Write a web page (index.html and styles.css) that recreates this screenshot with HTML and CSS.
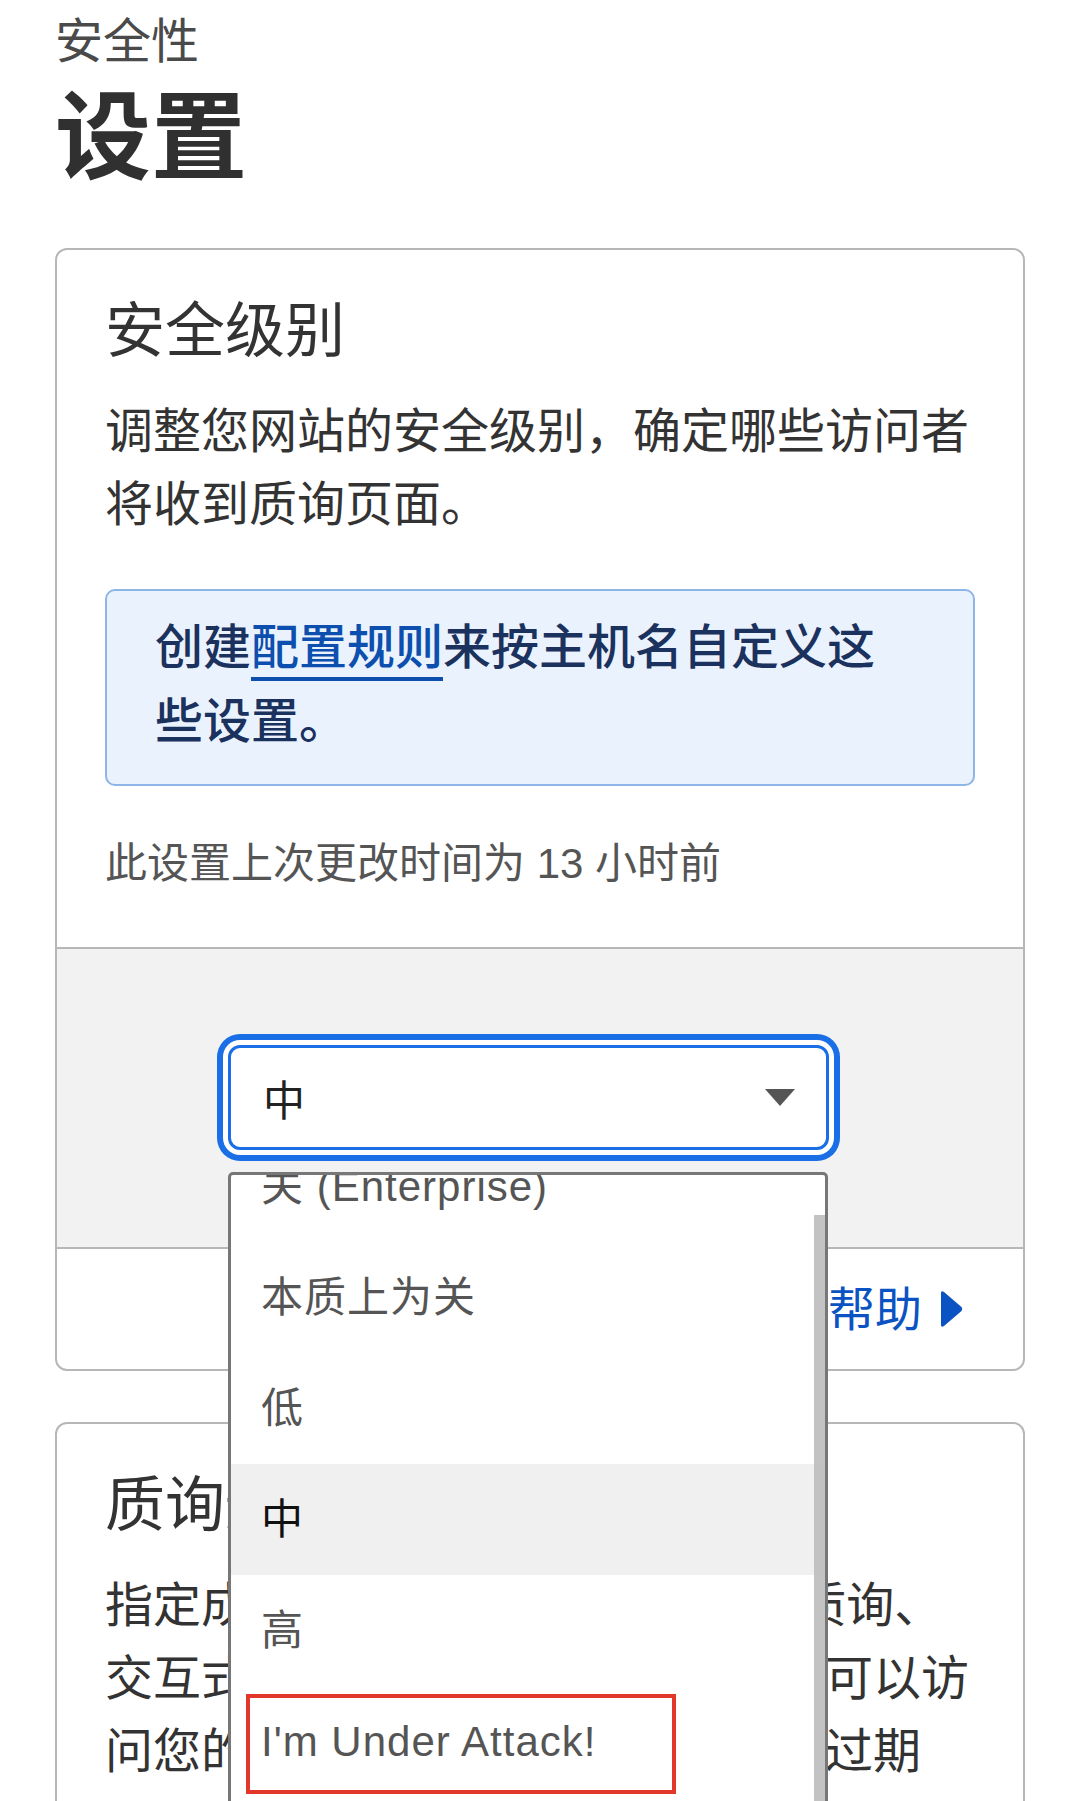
FILE: index.html
```html
<!DOCTYPE html>
<html lang="zh-CN">
<head>
<meta charset="utf-8">
<title>设置 - 安全性</title>
<link rel="stylesheet" href="styles.css">
</head>
<body>
<div class="page">
  <div class="crumb">安全性</div>
  <h1 class="page-title">设置</h1>

  <section class="card">
    <div class="card-body">
      <h2 class="card-title">安全级别</h2>
      <p class="card-desc">调整您网站的安全级别，确定哪些访问者将收到质询页面。</p>
      <div class="callout">创建<a class="callout-link" href="#">配置规则</a>来按主机名自定义这些设置。</div>
      <p class="meta">此设置上次更改时间为 13 小时前</p>
    </div>
    <div class="control">
      <div class="select-wrap">
        <div class="select">
          <span class="select-value">中</span>
          <svg class="select-caret" width="30" height="17" viewBox="0 0 30 17"><polygon points="0,0 30,0 15,17" fill="#555"/></svg>
        </div>
        <div class="listbox">
          <ul class="options">
            <li class="option">关 (Enterprise)</li>
            <li class="option">本质上为关</li>
            <li class="option">低</li>
            <li class="option selected">中</li>
            <li class="option">高</li>
            <li class="option marked">I'm Under Attack!</li>
          </ul>
          <div class="scroll-thumb"></div>
        </div>
      </div>
    </div>
    <div class="card-foot">
      <a class="help" href="#">帮助<svg class="help-caret" width="22" height="38" viewBox="0 0 22 38"><path d="M0 3 Q0 0 3 2 L20.5 17 Q22 19 20.5 21 L3 36 Q0 38 0 35 Z" fill="#0b53c3"/></svg></a>
    </div>
  </section>

  <section class="card">
    <div class="card-body">
      <h2 class="card-title">质询通过期</h2>
      <p class="card-desc">指定成功完成质询的访客（如JS 质询、交互式质询）后，多长时间内仍然可以访问您的网站而无需再次完成质询。过期后，访问者需要再次完成质询。</p>
    </div>
  </section>
</div>
</body>
</html>
```

FILE: styles.css
```css
html, body {
  margin: 0;
  padding: 0;
  overflow: hidden;
  background: #fff;
}

body {
  font-family: "Liberation Sans", "Noto Sans CJK SC", sans-serif;
  color: #333;
}

.page {
  padding: 13px 55px 0;
}

.crumb {
  font-size: 48px;
  line-height: 58px;
  color: #4a4a4a;
}

.page-title {
  margin: 12px 0 0;
  font-size: 96px;
  line-height: 110px;
  font-weight: 700;
  color: #303030;
}

.card {
  margin-top: 55px;
  border: 2px solid #b7b7b7;
  border-radius: 12px;
  background: #fff;
}

.card + .card {
  margin-top: 51px;
}

.card-body {
  padding: 47px 48px 53px;
}

.card-title {
  margin: 0 0 28px;
  font-size: 60px;
  line-height: 70px;
  font-weight: 400;
  color: #333;
}

.card-desc {
  margin: 0;
  font-size: 48px;
  line-height: 73px;
  color: #333;
}

.callout {
  margin-top: 48px;
  padding: 20px 60px 25px 48px;
  border: 2px solid #8db5e8;
  border-radius: 10px;
  background: #eaf3fd;
  font-size: 48px;
  line-height: 74px;
  font-weight: 500;
  color: #1b315e;
}

.callout-link {
  color: #0d4fae;
  text-decoration: none;
  border-bottom: 4px solid #0d4fae;
  padding-bottom: 3px;
}

.meta {
  margin: 48px 0 0;
  font-size: 42px;
  line-height: 60px;
  color: #555;
}

.control {
  padding: 96px 0 97px 171px;
  background: #f2f2f2;
  border-top: 2px solid #b7b7b7;
  border-bottom: 2px solid #b7b7b7;
}

.select-wrap {
  position: relative;
  width: 601px;
}

.select {
  box-sizing: border-box;
  height: 105px;
  display: flex;
  align-items: center;
  justify-content: space-between;
  padding: 0 31px 0 32px;
  border: 3px solid #1a6fe6;
  border-radius: 12px;
  background: #fff;
  box-shadow: 0 0 0 5px #fff, 0 0 0 11px #1a6fe6;
  font-size: 42px;
  color: #222;
}

.listbox {
  position: absolute;
  z-index: 10;
  top: 127px;
  left: 0;
  width: 600px;
  height: 700px;
  box-sizing: border-box;
  border: 3px solid #777;
  border-radius: 5px 5px 0 0;
  background: #fff;
  overflow: hidden;
}

.options {
  list-style: none;
  margin: -44px 0 0;
  padding: 0;
}

.option {
  position: relative;
  height: 111px;
  line-height: 111px;
  padding-left: 30px;
  font-size: 42px;
  letter-spacing: 1px;
  color: #555;
  white-space: nowrap;
}

.option.selected {
  background: #f0f0f0;
  color: #111;
}

.option.marked::after {
  content: "";
  position: absolute;
  left: 15px;
  top: 8px;
  width: 430px;
  height: 100px;
  box-sizing: border-box;
  border: 4px solid #e2372b;
}

.scroll-thumb {
  position: absolute;
  top: 40px;
  right: 0;
  bottom: 0;
  width: 11px;
  background: #bdbdbd;
  opacity: 0.9;
}

.card-foot {
  height: 120px;
  display: flex;
  align-items: center;
  justify-content: flex-end;
  padding-right: 60px;
}

.help {
  display: flex;
  align-items: center;
  gap: 19px;
  font-size: 47px;
  line-height: 1;
  color: #0b53c3;
  text-decoration: none;
}

.help-caret {
  display: block;
}
```
